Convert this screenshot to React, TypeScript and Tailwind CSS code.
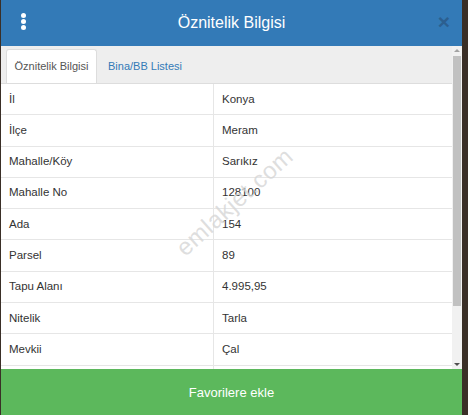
import React from "react";

const rows: [string, string][] = [
  ["İl", "Konya"],
  ["İlçe", "Meram"],
  ["Mahalle/Köy", "Sarıkız"],
  ["Mahalle No", "128100"],
  ["Ada", "154"],
  ["Parsel", "89"],
  ["Tapu Alanı", "4.995,95"],
  ["Nitelik", "Tarla"],
  ["Mevkii", "Çal"],
  ["", ""],
];

export default function App() {
  return (
    <div
      className="relative h-[415px] w-[468px] overflow-hidden bg-[#3a2f27] pl-[1px]"
      style={{ fontFamily: '"Liberation Sans", Arial, sans-serif' }}
    >
      <div className="flex h-full w-[461px] flex-col bg-white">
        {/* header */}
        <div className="relative flex h-[46px] shrink-0 items-center justify-center bg-[#337ab7]">
          <div className="absolute left-[20px] top-[13px] flex flex-col gap-[1px]">
            <span className="h-[5px] w-[5px] rounded-full bg-white" />
            <span className="h-[5px] w-[5px] rounded-full bg-white" />
            <span className="h-[5px] w-[5px] rounded-full bg-white" />
          </div>
          <h1 className="text-[16px] text-white">Öznitelik Bilgisi</h1>
          <span className="absolute right-[12px] top-[11px] text-[21px] font-bold leading-none text-[#2c5f8f]">×</span>
        </div>

        {/* body */}
        <div className="flex min-h-0 flex-1">
          <div className="min-w-0 flex-1 overflow-hidden">
            <div className="flex h-[38px] items-end gap-[2px] border-b border-[#ddd] bg-[#eee] pl-[5px] text-[11px]">
              <div className="flex h-[34px] w-[91px] items-center justify-center rounded-t-[3px] border border-b-0 border-[#ddd] bg-white text-[#555]">
                Öznitelik Bilgisi
              </div>
              <div className="flex h-[34px] items-center px-[9px] text-[#337ab7]">Bina/BB Listesi</div>
            </div>
            <div className="text-[11.5px] text-[#333]">
              {rows.map(([k, v], i) => (
                <div key={i} className="flex h-[31.3px] border-b border-[#e6e6e6]">
                  <div className="flex w-[213px] items-center border-r border-[#e6e6e6] pl-[8px]">{k}</div>
                  <div className="flex flex-1 items-center pl-[8px]">{v}</div>
                </div>
              ))}
            </div>
          </div>
          {/* scrollbar */}
          <div className="flex w-[10px] shrink-0 flex-col items-center bg-[#f1f1f1]">
            <span className="mt-[3px] h-0 w-0 border-x-[3px] border-b-[3px] border-x-transparent border-b-[#a3a3a3]" />
            <div className="mt-[4px] h-[250px] w-[8px] bg-[#c1c1c1]" />
            <div className="flex-1" />
            <span className="mb-[3px] h-0 w-0 border-x-[3px] border-t-[3px] border-x-transparent border-t-[#505050]" />
          </div>
        </div>

        {/* footer */}
        <button className="flex h-[46px] shrink-0 items-center justify-center bg-[#5cb85c] pt-[2px] text-[13px] text-white">
          Favorilere ekle
        </button>
      </div>

      {/* watermark */}
      <div className="pointer-events-none absolute left-[161px] top-[184px] -rotate-[42deg] select-none text-[24px] tracking-[0.5px] text-[#d6d6d6]/80">
        emlakjet.com
      </div>
    </div>
  );
}
